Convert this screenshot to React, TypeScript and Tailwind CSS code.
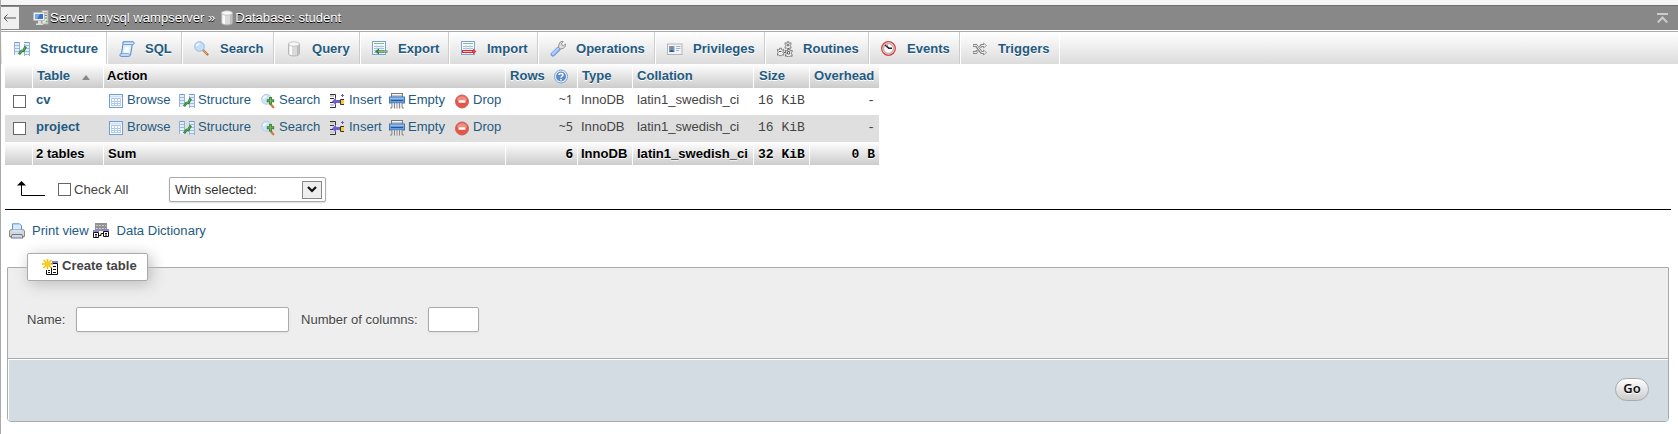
import type { ReactNode } from 'react';

type IconName =
  | 'structure' | 'sql' | 'search' | 'database' | 'export' | 'import' | 'wrench' | 'card'
  | 'gears' | 'clock' | 'shuffle' | 'server' | 'browse' | 'find' | 'insert' | 'shredder'
  | 'drop' | 'help' | 'printer' | 'dictionary' | 'newTable';

const sheet = (
  <>
    <rect x=".5" y=".5" width="13" height="13" fill="#f4f9ff" stroke="#7ba3d4" />
    <path d="M2 2.500h10" stroke="#8cc078" />
    <path d="M2 5.500h10M2 7.500h10M2 9.500h10M2 11.500h10" stroke="#a3bee0" />
    <path d="M5 4v9M9 4v9" stroke="#c4d6ee" />
  </>
);

const gear = (
  <path d="M3.500.8h2v1.400l1.200.5L8 2v2l-.8.8v1L8 7v1.500l-1.600-.4-.9 1h-2l-.8-1L1 8.500V7l.8-1.200v-1L1 4V2l1.400.7 1.100-.5z" fill="#eee" stroke="#666" strokeWidth=".9" />
);

const drawings: Record<IconName, ReactNode> = {
  structure: (
    <>
      <path d="M0 1.500h6M10 1.500h6" stroke="#6f9bd1" />
      <path d="M.5 1v13M5.500 1v12M10.500 3v12M15.500 1v14" stroke="#8fb2df" />
      <rect x="1" y="2" width="4" height="12" fill="#e5effb" />
      <rect x="11" y="2" width="4" height="12" fill="#e5effb" />
      <path d="M1 4.500h4M1 7.500h4M1 10.500h4M11 4.500h4M11 7.500h4M11 10.500h4M11 13.500h4" stroke="#9bbbe4" />
      <path d="M5 13.200 7.500 10h1.800l2.500-4.500" fill="none" stroke="#2f8038" strokeWidth="2.600" />
      <path d="M5.500 12.500 7.800 9.600h1.500l2-3.600" fill="none" stroke="#67b85c" strokeWidth=".9" />
    </>
  ),
  sql: (
    <>
      <path d="M4 .8h10c1.300 0 1.500 2.200.3 2.700h-1L11.500 14c-.2 1-1 1.300-1.800 1.300H2C.6 15.300.5 13 1.800 12.700h.7L4 3z" fill="#dcebfc" stroke="#4c87cd" />
      <path d="M4.500 3.500h9M2.200 12.700h7.500c.7.400.8 1.300.3 2.200" fill="none" stroke="#6fa1dc" />
      <path d="M5.500 5.500h5.500l-1 6H4.500z" fill="#fff" opacity=".8" />
    </>
  ),
  search: (
    <>
      <path d="m9 9 4.500 4.500" stroke="#bc7740" strokeWidth="2.400" strokeLinecap="round" />
      <path d="m9.500 9.500 3.500 3.500" stroke="#f0b27c" />
      <circle cx="5.500" cy="5.500" r="4.800" fill="#c5dffa" stroke="#94b8e6" />
      <path d="M2.500 5c.4-1.600 1.500-2.300 3-2.300" fill="none" stroke="#fff" strokeWidth="1.300" />
    </>
  ),
  database: (
    <g transform="translate(1.500 0)">
      <path d="M1 3v9.500C1 14 3 15 6.500 15s5.500-1 5.500-2.500V3z" fill="#dadada" stroke="#aaa" strokeWidth=".8" />
      <path d="M2 4v9c.7.700 1.500 1 2.500 1.200V5z" fill="#fafafa" />
      <path d="M9.500 5v9.200l1.800-1V4z" fill="#b9b9b9" />
      <ellipse cx="6.500" cy="3" rx="5.500" ry="2.200" fill="#f7f7f7" stroke="#bbb" strokeWidth=".8" />
    </g>
  ),
  export: (
    <>
      {sheet}
      <path d="M15.500 10.500H6.500" stroke="#34802f" strokeWidth="2" />
      <path d="M3 10.500 7 7.500v6z" fill="#34802f" />
      <path d="M6 10.500h9" stroke="#a0d788" strokeWidth=".7" />
    </>
  ),
  import: (
    <>
      {sheet}
      <path d="M1 10.500h11" stroke="#d72d28" strokeWidth="3" />
      <path d="M2 10.500h9" stroke="#ffc6bc" />
      <path d="m12 7.500 3.500 3-3.500 3z" fill="#e5423b" />
    </>
  ),
  wrench: (
    <>
      <path d="M2.800 13.300 8.500 7.800" stroke="#6f97da" strokeWidth="4.400" strokeLinecap="round" />
      <path d="M2.800 13 8.300 7.600" stroke="#b0cbf5" strokeWidth="2.500" strokeLinecap="round" />
      <path d="M8.300 6.300 9.400 2c.8-1.200 2-1.700 3.800-1.500L11.500 2.800l.6 1.400 1.500.4L15.500 3c.3 2-.6 3.500-2 4.200l-2.800.9z" fill="#ddd" stroke="#8b8b8b" strokeWidth=".9" />
    </>
  ),
  card: (
    <>
      <rect x=".5" y="3" width="14.500" height="10.500" fill="#f3f3f3" stroke="#b5b5b5" />
      <rect x="2" y="5" width="5.500" height="6" fill="#6aa3df" />
      <circle cx="4.700" cy="7" r="1.400" fill="#c56b43" />
      <path d="M2.500 11c.4-3 4-3 4.500 0z" fill="#265d9e" />
      <path d="M9 5.500h4.500M9 7.500h4.500M9 9.500h3" stroke="#a1b6cc" />
    </>
  ),
  gears: (
    <>
      <g transform="translate(7.200 0) scale(.85)">{gear}</g>
      <g transform="translate(-.5 6.500) scale(.9)">{gear}</g>
      <g transform="translate(7.500 7.200) scale(.95)">{gear}</g>
      <path d="M11 2.500v3M9.500 4h3M2 10.500h2.500M10.500 10.500h2v2.500h-2zM7 11.500h2M11.500 7v1.500" stroke="#666" fill="#fff" />
    </>
  ),
  clock: (
    <>
      <circle cx="7.500" cy="7.500" r="6.800" fill="#eee" stroke="#e03c3c" strokeWidth="1.300" />
      <circle cx="7.500" cy="7.500" r="5" fill="#fff" stroke="#b5b5b5" strokeWidth="1.300" />
      <path d="m4 4 3.800 3.200H11" fill="none" stroke="#222" strokeWidth="1.600" />
      <path d="m5 5 2-1" stroke="#e15252" />
    </>
  ),
  shuffle: (
    <>
      <path d="M1 4.500h3l5.500 7H12M1 11.500h3l1.500-2M8 6.500l1.500-2H12" fill="none" stroke="#858585" strokeWidth="2.800" />
      <path d="M11.500 2 14.500 4.500l-3 2.500zM11.500 9l3 2.500-3 2.500z" fill="#eee" stroke="#888" strokeWidth=".8" />
      <path d="M1.500 4.500h3l5 7H13M1.500 11.500h3l1-1.500M8 6.500l1.500-2H13" fill="none" stroke="#eee" />
    </>
  ),
  server: (
    <>
      <rect x="9" y=".5" width="6" height="13.500" fill="#e5e5e5" stroke="#aaa" />
      <path d="M10 3h4M10 5.500h4M10 8h4" stroke="#777" />
      <circle cx="13.500" cy="11.500" r="1" fill="#55d43b" />
      <rect x=".5" y="2.500" width="11" height="8" rx=".5" fill="#f0f0f0" stroke="#bbb" />
      <rect x="2" y="4" width="8" height="5" fill="#3774c8" />
      <path d="M2 4h5L4 9H2z" fill="#77a9e5" />
      <path d="M5 11h3v2.500h2v1.500H3v-1.500h2z" fill="#ddd" />
    </>
  ),
  browse: (
    <>
      <rect x=".5" y="1.500" width="13" height="13" fill="#fff" stroke="#6d9ddb" />
      <path d="M1 3.500h12" stroke="#cfe1f7" strokeWidth="2" />
      <path d="M2 5.500h10M2 8.500h10M2 10.500h10M2 12.500h10" stroke="#a9c6ea" />
      <path d="M2.500 5v8M5.500 5v8M8.500 5v8M11.500 5v8" stroke="#b7cfee" />
    </>
  ),
  find: (
    <>
      <path d="m9.500 11 2.800 3.200" stroke="#c98245" strokeWidth="2.400" strokeLinecap="round" />
      <circle cx="5.500" cy="6.300" r="5" fill="#cfe2f9" stroke="#b3cdee" />
      <path d="M2.500 6c.3-1.600 1.400-2.400 3-2.500" fill="none" stroke="#fff" strokeWidth="1.300" />
      <path d="M9.500 4v7.400M5.800 7.700h7.400" stroke="#3d8538" strokeWidth="2.900" />
      <path d="M9.500 5v5.400M6.800 7.700h5.400" stroke="#6bb857" strokeWidth="1.100" />
    </>
  ),
  insert: (
    <>
      <path d="M0 1.500h5.500V5M0 5.500h4M0 9.500h4M0 14.500h5.500V10" fill="none" stroke="#333" />
      <path d="M0 3h4M0 12h4" stroke="#ccc" strokeWidth="2" />
      <path d="m2 8.500 4-4V7h4v3H6v2.500z" fill="#6961d2" />
      <path d="M12.500 1v3M11 2.500h3" stroke="#6961d2" />
      <path d="M14 6.500h-3.500v5H14" fill="#fc3" stroke="#333" />
    </>
  ),
  shredder: (
    <>
      <rect x="2.500" y=".5" width="11" height="4" fill="#c6c6c6" stroke="#777" />
      <path d="M3 1.500h10" stroke="#f6f6f6" />
      <rect x=".5" y="4" width="15" height="6" fill="#6c9dda" stroke="#3f76b8" />
      <path d="M1 5.200h14" stroke="#a1c8f4" />
      <path d="M2 7.500h12" stroke="#235493" />
      <path d="M3 10v4l-1.500 1.500M5.500 10v5.500M8 10v5.500M10.500 10v5.500M13 10v4l1.500 1.500" fill="none" stroke="#888" strokeWidth="1.200" />
      <path d="M4.200 10v5M6.800 10v5M9.200 10v5M11.800 10v5" stroke="#e5e5e5" />
    </>
  ),
  drop: (
    <>
      <circle cx="7" cy="8.500" r="6.500" fill="#e65546" stroke="#c4655d" />
      <path d="M1.900 7.500a5.200 5.200 0 0 1 10.200 0z" fill="#f18e83" />
      <rect x="3.500" y="7.200" width="7" height="2.600" rx=".5" fill="#fff" />
    </>
  ),
  help: (
    <>
      <circle cx="7" cy="7.500" r="6.500" fill="#f0f5fb" stroke="#7da1cd" />
      <circle cx="7" cy="7.500" r="5" fill="#5b8cc9" />
      <path d="M5 6C5 3.900 9 3.900 9 6 9 7.300 7 7.300 7 8.800" fill="none" stroke="#fff" strokeWidth="1.400" />
      <circle cx="7" cy="10.700" r=".9" fill="#fff" />
    </>
  ),
  printer: (
    <>
      <path d="M3.500 7V.8h7l2 2V7z" fill="#d8eaff" stroke="#5b91d4" />
      <path d="M2.500 6.500h11c1.500 0 2 1 2 2.500v4.500H.5V9c0-1.500.5-2.500 2-2.500z" fill="#d6d6d6" stroke="#898989" />
      <path d="M3.500 6.500h9V9h-9z" fill="#cfe3fb" />
      <path d="M3 11.500h10l1 3.500H2z" fill="#c3dcf8" stroke="#777" />
    </>
  ),
  dictionary: (
    <>
      <rect x="2" y="0" width="12" height="8" fill="#929292" />
      <path d="M3 2.500h10M3 5.500h10" stroke="#ccc" strokeDasharray="2 1" />
      <rect x="0" y="7" width="6" height="2" fill="#8782d8" />
      <rect x="10" y="6" width="6" height="2" fill="#8782d8" />
      <path d="M.5 9.500h5v5h-5zM10.500 8.500h5v5h-5z" fill="#fff" stroke="#111" />
      <path d="M2 11.500h2M2 13h2M12 10.500h2M12 12h2M6 12.500h2v-2h2" fill="none" stroke="#111" />
    </>
  ),
  newTable: (
    <>
      <rect x="10" y="2" width="6" height="2" fill="#8782d8" />
      <path d="M9 4.500h6.500v11H4.500V11" fill="#fff" stroke="#111" />
      <path d="M9.500 8v8" stroke="#111" />
      <path d="M11 7.500h3M11 10.500h3M11 13.500h3M6 11.500h2M6 13.500h2" stroke="#111" />
      <path d="M5.500 0v10M0 5h11M1.500 1l8 8M9.500 1l-8 8" stroke="#f1bd0a" strokeWidth="1.500" />
      <circle cx="5.500" cy="5" r="2.600" fill="#f9cd18" />
    </>
  ),
};

function Icon({ name, className = '' }: { name: IconName; className?: string }) {
  return (
    <svg viewBox="0 0 16 16" className={`block h-4 w-4 shrink-0 ${className}`} aria-hidden="true">
      {drawings[name]}
    </svg>
  );
}

const tabs: { label: string; icon: IconName; width: string }[] = [
  { label: 'Structure', icon: 'structure', width: 'w-[105px]' },
  { label: 'SQL', icon: 'sql', width: 'w-[75px]' },
  { label: 'Search', icon: 'search', width: 'w-[92px]' },
  { label: 'Query', icon: 'database', width: 'w-[86px]' },
  { label: 'Export', icon: 'export', width: 'w-[89px]' },
  { label: 'Import', icon: 'import', width: 'w-[89px]' },
  { label: 'Operations', icon: 'wrench', width: 'w-[117px]' },
  { label: 'Privileges', icon: 'card', width: 'w-[110px]' },
  { label: 'Routines', icon: 'gears', width: 'w-[104px]' },
  { label: 'Events', icon: 'clock', width: 'w-[91px]' },
  { label: 'Triggers', icon: 'shuffle', width: 'w-[100px]' },
];

const actions: { label: string; icon: IconName; width: string; gap: string }[] = [
  { label: 'Browse', icon: 'browse', width: 'w-[70px]', gap: 'mr-[2px]' },
  { label: 'Structure', icon: 'structure', width: 'w-[82px]', gap: 'mr-[3px]' },
  { label: 'Search', icon: 'find', width: 'w-[69px]', gap: 'mr-[2px]' },
  { label: 'Insert', icon: 'insert', width: 'w-[59px]', gap: 'mr-[3px]' },
  { label: 'Empty', icon: 'shredder', width: 'w-[66px]', gap: 'mr-[3px]' },
  { label: 'Drop', icon: 'drop', width: 'w-[50px]', gap: 'mr-[2px]' },
];

const columns = 'grid w-[874px] grid-cols-[27px_70px_401px_71px_54px_120px_55px_69px] gap-x-px';
const bar = 'bg-linear-to-b from-white to-[#cccccc]';
const mono = 'font-["Liberation_Mono"] text-[13px]';
const figures = 'font-["Noto_Sans"] text-[12.500px]';

function Checkbox() {
  return <span className="block h-[13px] w-[13px] shrink-0 border border-[#666] bg-white" />;
}

function Row({ name, count, shaded }: { name: string; count: string; shaded?: boolean }) {
  return (
    <div className={`${columns} h-[27px] items-start leading-[18px] ${shaded ? 'bg-[#dfdfdf]' : 'bg-white'}`}>
      <span className="pt-[7px] pl-2"><Checkbox /></span>
      <span className="pt-[3px] pl-[3px] font-bold text-[#235a81]">{name}</span>
      <span className="flex pt-[3px] pl-[5px] text-[#235a81]">
        {actions.map((a) => (
          <span key={a.label} className={`flex shrink-0 ${a.width}`}>
            <Icon name={a.icon} className={`mt-[2px] ${a.gap}`} />
            {a.label}
          </span>
        ))}
      </span>
      <span className={`pt-[3px] pr-1 text-right ${figures}`}>{count}</span>
      <span className="pt-[3px] pl-[3px]">InnoDB</span>
      <span className="pt-[3px] pl-1">latin1_swedish_ci</span>
      <span className={`pt-[4px] pl-1 whitespace-pre ${mono}`}>16 KiB</span>
      <span className={`pt-[4px] pr-1 text-right ${mono}`}>-</span>
    </div>
  );
}

export default function App() {
  return (
    <div className='h-[434px] w-full overflow-hidden border-l border-[#aaa] bg-white font-["Liberation_Sans",Arial,sans-serif] text-[13.050px] leading-[18px] whitespace-nowrap text-[#444]'>
      <div className="h-[5px] bg-[#f5f5f5]" />
      <header className="flex h-[25px] items-center border-t border-[#6f6f6f] bg-[#888] text-white [text-shadow:0_1px_0_#000]">
        <span className="flex h-[22px] w-[18px] items-center justify-center bg-[#f0f0f0]">
          <svg viewBox="0 0 14 10" className="h-[10px] w-[14px]"><path d="M1 5h12M4.500 1.500 1 5l3.500 3.500" fill="none" stroke="#555" /></svg>
        </span>
        <Icon name="server" className="ml-[14px]" />
        <span className="ml-px">Server: mysql wampserver »</span>
        <Icon name="database" className="ml-[4px]" />
        <span>Database: student</span>
        <svg viewBox="0 0 11 10" className="mr-[10px] ml-auto h-[10px] w-[11px]">
          <path d="M0 1h11" stroke="#ccc" strokeWidth="2" />
          <path d="m.8 9.500 4.700-5 4.700 5" fill="none" stroke="#ccc" strokeWidth="2" />
        </svg>
      </header>
      <nav className="mt-px flex h-[33px] border-t border-[#aaa] bg-linear-to-b from-white to-[#dcdcdc] pl-px font-bold text-[#235a81]">
        {tabs.map((tab, i) => (
          <a
            key={tab.label}
            className={`flex shrink-0 items-center border-r pt-px ${tab.width} ${i === 0 ? 'bg-white pl-3' : 'border-l border-l-white pl-[11px]'} ${i === tabs.length - 1 ? 'border-r-white' : 'border-r-[#ccc]'} [text-shadow:0_1px_0_#fff]`}
          >
            <Icon name={tab.icon} className="mr-[10px]" />
            {tab.label}
          </a>
        ))}
      </nav>

      <main className="pl-1">
        <div className={`${columns} h-6 font-bold text-[#235a81] [text-shadow:0_1px_0_#fff] *:pt-[3px]`}>
          <span className={bar} />
          <span className={`${bar} flex pl-1`}>
            Table
            <svg viewBox="0 0 8 5" className="mt-[8px] ml-[12px] h-[5px] w-2"><path d="m4 0 4 5H0z" fill="#888" /></svg>
          </span>
          <span className={`${bar} pl-[3px] text-black`}>Action</span>
          <span className={`${bar} flex pl-1`}>Rows<Icon name="help" className="mt-[2px] ml-[9px]" /></span>
          <span className={`${bar} pl-1`}>Type</span>
          <span className={`${bar} pl-1`}>Collation</span>
          <span className={`${bar} pl-[5px]`}>Size</span>
          <span className={`${bar} pl-[4px]`}>Overhead</span>
        </div>
        <Row name="cv" count="~1" />
        <Row name="project" count="~5" shaded />
        <div className={`${columns} h-[23px] font-bold text-black [text-shadow:0_1px_0_#fff] *:pt-[3px]`}>
          <span className={bar} />
          <span className={`${bar} pl-[3px]`}>2 tables</span>
          <span className={`${bar} pl-[4px]`}>Sum</span>
          <span className={`${bar} pr-1 text-right ${figures}`}>6</span>
          <span className={`${bar} pl-[3px]`}>InnoDB</span>
          <span className={`${bar} pl-[4px]`}>latin1_swedish_ci</span>
          <span className={`${bar} pl-1 leading-[20px] ${mono}`}>32 KiB</span>
          <span className={`${bar} pr-1 text-right leading-[20px] ${mono}`}>0 B</span>
        </div>

        <div className="flex h-11 items-start pt-3">
          <svg viewBox="0 0 28 16" className="mt-[4px] ml-3 h-4 w-7">
            <path d="M4.500 3v11.500H28" fill="none" stroke="#000" />
            <path d="M4.500 0 9 4.500H0z" fill="#000" />
          </svg>
          <span className="mt-[6px] ml-[13px]"><Checkbox /></span>
          <span className="mt-[4px] ml-[3px] w-[46px]">Check All</span>
          <div className="ml-[49px] flex h-[25px] w-[157px] shrink-0 items-center rounded-[2px] border border-[#aaa] bg-white pl-[5px] text-[#333] shadow-[0_1px_2px_#ddd]">
            With selected:
            <span className="mr-[3px] ml-auto flex h-[18px] w-[20px] items-center justify-center border border-[#888] bg-[#eee]">
              <svg viewBox="0 0 10 7" className="h-[7px] w-[10px]"><path d="m1 1 4 4 4-4" fill="none" stroke="#111" strokeWidth="2.200" /></svg>
            </span>
          </div>
        </div>
        <div className="mr-[7px] h-px bg-black" />

        <div className="flex h-[44px] pt-[12px] text-[#235a81]">
          <Icon name="printer" className="mt-px ml-1" />
          <span className="ml-[7px]">Print view</span>
          <Icon name="dictionary" className="mt-px ml-1" />
          <span className="ml-2">Data Dictionary</span>
        </div>

        <section className="-mt-px mr-[9px] ml-[2px]">
          <div className="relative z-10 ml-5 -mb-[14px] flex h-7 w-[121px] items-center rounded-[2px] border border-[#aaa] bg-white pl-[14px] font-bold shadow-[3px_3px_15px_#bbb]">
            <Icon name="newTable" className="mr-1" />
            <span className="-mt-[3px]">Create table</span>
          </div>
          <div className="h-[155px] overflow-hidden rounded-t-[1px] rounded-b-[4px] border border-[#aaa]">
            <div className="flex h-[90px] items-start bg-[#eee] pt-[39px] pl-[19px] [text-shadow:0_1px_0_#fff]">
              <span className="mt-[4px] w-[49px]">Name:</span>
              <input className="h-[25px] w-[213px] rounded-[2px] border border-[#aaa] bg-white shadow-[0_1px_2px_#ddd]" />
              <span className="mt-[4px] ml-3 w-[127px]">Number of columns:</span>
              <input className="h-[25px] w-[51px] rounded-[2px] border border-[#aaa] bg-white shadow-[0_1px_2px_#ddd]" />
            </div>
            <div className="flex h-[63px] items-start justify-end border-t border-[#aaa] bg-[#d3dce3] pt-[19px] pr-[19px] shadow-[inset_1px_1px_0_#fff]">
              <button className='flex h-[23px] w-[34px] justify-center rounded-full border border-[#aaa] bg-linear-to-b from-white to-[#ccc] font-["Noto_Sans"] text-[13px] leading-[19px] font-semibold text-[#111] [text-shadow:0_1px_0_#fff]'>
                Go
              </button>
            </div>
          </div>
        </section>
      </main>
    </div>
  );
}
